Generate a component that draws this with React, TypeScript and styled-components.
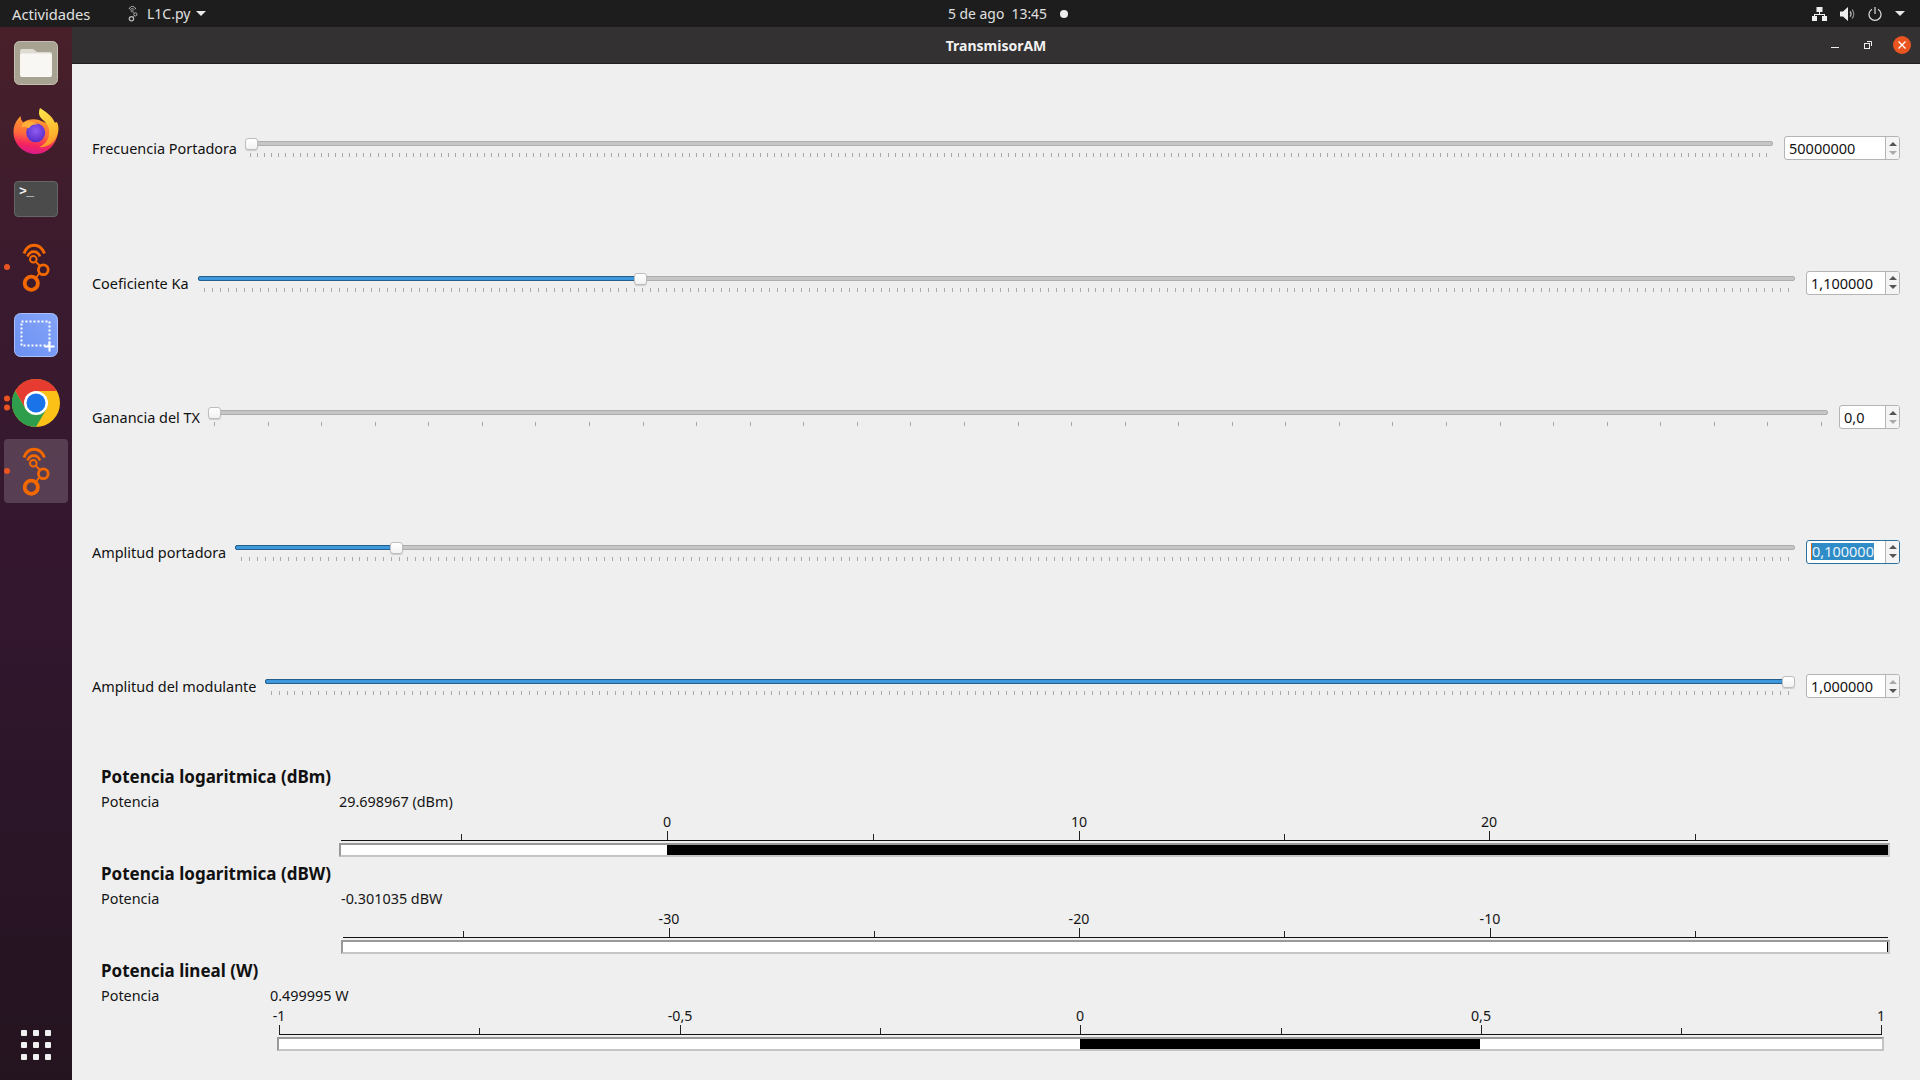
import React from "react";
import styled, { createGlobalStyle } from "styled-components";

const UI = `"Noto Sans", "Open Sans", sans-serif`;

const Global = createGlobalStyle`
  html, body { margin: 0; padding: 0; width: 1920px; height: 1080px; overflow: hidden; background: #efefef; }
  #root { width: 1920px; height: 1080px; }
  * { box-sizing: border-box; }
`;

const Screen = styled.div`
  width: 1920px; height: 1080px; display: flex; flex-direction: column;
  font-family: ${UI}; color: #1a1a1a;
`;

/* ---------- top bar ---------- */
const TopBar = styled.header`
  height: 27px; flex: none; background: #1d1d1d; color: #e0e0e0; display: flex; align-items: center;
  font-size: 14px;
`;
const TopLeft = styled.div`
  width: 948px; flex: none; display: flex; align-items: center; padding-left: 12px;
`;
const Activities = styled.span`
  width: 116px; flex: none; font-size: 14.7px;
`;
const AppName = styled.span`
  margin: 0 6px 0 9px;
`;
const Clock = styled.div`
  display: flex; align-items: center; white-space: pre; font-size: 13.9px;
`;
const ClockDot = styled.span`
  width: 8px; height: 8px; border-radius: 50%; background: #eee; margin-left: 13px;
`;
const Tray = styled.div`
  margin-left: auto; display: flex; align-items: center; padding-right: 15px; gap: 13px;
`;
const Caret = styled.span`
  width: 0; height: 0; border-left: 5px solid transparent; border-right: 5px solid transparent;
  border-top: 5px solid #e8e8e8;
`;

/* ---------- desktop ---------- */
const Desktop = styled.div`
  flex: 1; display: flex; min-height: 0;
`;
const Dock = styled.nav`
  width: 72px; flex: none; display: flex; flex-direction: column; padding: 2px 0 20px;
  background: linear-gradient(180deg, #48202a 0%, #3a1a2e 25%, #34172f 50%, #2b1528 75%, #24141f 100%);
`;
const DockItem = styled.div<{ $active?: boolean }>`
  height: 68px; flex: none; position: relative; display: flex; align-items: center; justify-content: center;
  &::before {
    content: ""; position: absolute; left: 4px; right: 4px; top: 2px; bottom: 2px; border-radius: 4px;
    background: ${(p) => (p.$active ? "rgba(255,255,255,0.17)" : "transparent")};
  }
  & > svg, & > div { position: relative; }
`;
const RunDots = styled.div`
  position: absolute !important; left: 4px; top: 50%; transform: translateY(-50%);
  display: flex; flex-direction: column; gap: 3px;
`;
const RunDot = styled.span`
  width: 6px; height: 6px; border-radius: 50%; background: #e95420; display: block;
`;
const TerminalTile = styled.div`
  width: 44px; height: 36px; border-radius: 4px; background: #4b4b4b; border: 1px solid #666;
  color: #f2f2f2; font: bold 13px/1 "Liberation Mono", monospace; padding: 3px 0 0 4px; letter-spacing: -0.5px;
`;
const AppsGrid = styled.div`
  margin-top: auto; width: 30px; align-self: center; display: grid; grid-template-columns: repeat(3, 6px);
  grid-auto-rows: 6px; gap: 6px;
`;
const AppsDot = styled.span`
  background: #f1f1f1; border-radius: 1px;
`;

/* ---------- window ---------- */
const Window = styled.main`
  flex: 1; display: flex; flex-direction: column; min-width: 0;
`;
const TitleBar = styled.div`
  height: 37px; flex: none; background: #333131; border-bottom: 1px solid #1f1f1f; display: flex; align-items: center;
  position: relative; justify-content: center; color: #f2f2f2; font-weight: 700; font-size: 14px;
`;
const WinButtons = styled.div`
  position: absolute; right: 9px; top: 0; height: 36px; display: flex; align-items: center; gap: 21px;
`;
const MinGlyph = styled.svg`
  margin-right: 4px;
`;
const CloseBtn = styled.span`
  width: 18px; height: 18px; border-radius: 50%; background: #e95420; display: flex; align-items: center; justify-content: center;
`;
const Content = styled.div`
  flex: 1; background: #efefef; display: flex; flex-direction: column; padding: 16.75px 20px 0 20px; min-height: 0;
`;
const Rows = styled.section`
  flex: none; display: grid; grid-template-rows: repeat(5, 134.5px);
`;
const Row = styled.div`
  display: flex; align-items: center; gap: 11px;
`;
const RowLabel = styled.label<{ $w: number }>`
  width: ${(p) => p.$w}px; flex: none; font-size: 14.45px; line-height: 20px; white-space: nowrap;
  color: #111; padding-top: 2px;
`;
const Slider = styled.div`
  flex: 1; min-width: 0; height: 24px; position: relative; padding-top: 5px;
`;
const Groove = styled.div`
  height: 5px; border-radius: 2px; background: #c6c6c6; border: 1px solid #adadad; position: relative;
`;
const GrooveFill = styled.div`
  position: absolute; left: -1px; top: -1px; bottom: -1px; border-radius: 2px;
  background: #3d98dc; border: 1px solid #245f8c;
`;
const Handle = styled.div`
  position: absolute; top: 2px; width: 13px; height: 12px; border-radius: 3px;
  background: linear-gradient(#ffffff, #f2f2f2); border: 1px solid #bdbdbd; box-shadow: 0 1px 1px rgba(0,0,0,0.15);
`;
const TickStrip = styled.svg`
  display: block; width: 100%; height: 4px; margin-top: 7px; overflow: visible;
`;
const Spin = styled.div<{ $w: number; $focus?: boolean }>`
  width: ${(p) => p.$w}px; height: 24px; flex: none; display: flex; background: #fff; border-radius: 3px;
  border: 1px solid ${(p) => (p.$focus ? "#2b6f9e" : "#b4b4b4")}; font-size: 14.5px;
`;
const SpinValue = styled.div`
  flex: 1; min-width: 0; display: flex; align-items: center; padding-left: 4px; color: #111;
`;
const Selected = styled.span`
  background: #308cc6; color: #eaf4fb; border-left: 1px solid #d2691e; line-height: 17px;
`;
const SpinArrows = styled.div`
  width: 14px; flex: none; border-left: 1px solid #b4b4b4; display: flex; flex-direction: column;
  align-items: center; justify-content: center; gap: 5px; background: #f4f4f4; border-radius: 0 2px 2px 0;
`;
const ArrowUp = styled.span<{ $off?: boolean }>`
  width: 0; height: 0; border-left: 4px solid transparent; border-right: 4px solid transparent;
  border-bottom: 4px solid ${(p) => (p.$off ? "#aaaaaa" : "#555555")};
`;
const ArrowDown = styled.span<{ $off?: boolean }>`
  width: 0; height: 0; border-left: 4px solid transparent; border-right: 4px solid transparent;
  border-top: 4px solid ${(p) => (p.$off ? "#aaaaaa" : "#555555")};
`;

/* ---------- meters ---------- */
const Meters = styled.section`
  margin-top: 11.75px; padding: 0 10px 0 9px;
`;
const Meter = styled.div`
  height: 97px; display: flex; flex-direction: column;
`;
const MeterTitle = styled.h3`
  margin: 0; height: 24px; line-height: 24px; font-size: 17px; font-weight: 700; color: #111; white-space: nowrap;
`;
const ReadingRow = styled.div`
  height: 18px; margin-top: 3px; display: flex; align-items: center; font-size: 14.4px; color: #151515;
`;
const ReadingName = styled.span<{ $w: number }>`
  width: ${(p) => p.$w}px; flex: none;
`;
const Gauge = styled.div<{ $left: number; $right: number }>`
  margin: 3px ${(p) => p.$right}px 0 ${(p) => p.$left}px;
`;
const Scale = styled.div`
  height: 28px; margin: 0 2px; position: relative; border-bottom: 1px solid #111;
`;
const ScaleTick = styled.span<{ $major?: boolean }>`
  position: absolute; bottom: 0; width: 1px; background: #222; height: ${(p) => (p.$major ? 9 : 6)}px;
`;
const ScaleLabel = styled.span`
  position: absolute; top: 0; font-size: 14.2px; line-height: 18px; transform: translateX(-50%); color: #151515;
`;
const Bar = styled.div`
  height: 14px; margin-top: 2px; background: #fff; position: relative;
  border-style: solid; border-width: 2px; border-color: #999 #c4c4c4 #c4c4c4 #999;
`;
const BarFill = styled.div`
  position: absolute; top: 0; bottom: 0; background: #000;
`;

/* ---------- icons ---------- */
const RadioLogo = ({ color = "#f46800", w = 30, h = 52 }: { color?: string; w?: number; h?: number }) => (
  <svg width={w} height={h} viewBox="21 10 30 52" fill="none" stroke={color}>
    <path d="M24 22.5C28 11.5 40 11.5 44.5 22.5" strokeWidth="3" />
    <path d="M27.5 25.5C30 19 37.5 19 40 25.5" strokeWidth="2.6" />
    <circle cx="33.3" cy="28.3" r="3.3" strokeWidth="2" />
    <circle cx="43.3" cy="38.7" r="4.9" strokeWidth="2.8" />
    <circle cx="31.3" cy="52.3" r="6.6" strokeWidth="3.8" />
    <path d="M36 31l4 4M39.5 42l-3.5 5" strokeWidth="1.8" />
  </svg>
);

const FilesIcon = () => (
  <svg width="44" height="44" viewBox="0 0 44 44">
    <rect x="0.5" y="0.5" width="43" height="43" rx="5" fill="#a8a292" stroke="#c4bfb1" />
    <path d="M6 10a2 2 0 0 1 2-2h11l4 3h13a2 2 0 0 1 2 2v8H6z" fill="#dfdbd2" />
    <path d="M6 14a2 2 0 0 1 2-1.500h28a2 2 0 0 1 2 2V34a2 2 0 0 1-2 2H8a2 2 0 0 1-2-2z" fill="#f8f7f4" />
  </svg>
);

const FirefoxIcon = () => (
  <svg width="46" height="46" viewBox="0 0 46 46">
    <defs>
      <linearGradient id="ffBody" x1="0.6" y1="0.1" x2="0.45" y2="1">
        <stop offset="0" stopColor="#ff9a2e" />
        <stop offset="0.45" stopColor="#ff6a3a" />
        <stop offset="0.75" stopColor="#f5245f" />
        <stop offset="1" stopColor="#d81b8c" />
      </linearGradient>
      <linearGradient id="ffTail" x1="0.4" y1="0" x2="0.6" y2="1">
        <stop offset="0" stopColor="#ffe24a" />
        <stop offset="0.7" stopColor="#ffb52c" />
        <stop offset="1" stopColor="#ff8a2c" />
      </linearGradient>
      <radialGradient id="ffGlobe" cx="0.5" cy="0.4" r="0.6">
        <stop offset="0" stopColor="#8f5cf0" />
        <stop offset="1" stopColor="#5a2bc9" />
      </radialGradient>
    </defs>
    <path d="M0.500 24C0.500 17 3.500 12 7.700 8C7.500 11 8.500 13 10.500 14.500C14 11.500 20 10.500 26 12L45 20C45.500 35 35 46 22.700 46C10.500 46 0.500 36 0.500 24z" fill="url(#ffBody)" />
    <path d="M27 0C25 5 26 9 30 12C35 16 37 21 36 27C35 33 31 37 26 39C34 40 41 35 44 28C46 23 46 18 44 14C42 15 41.500 14.500 41 13C39 8 33 4 27 0z" fill="url(#ffTail)" />
    <circle cx="22.700" cy="24.700" r="9.500" fill="url(#ffGlobe)" />
    <path d="M10.500 14.500C14 12.500 20 13 25 17C20.500 15.500 17 17.500 16 20.500C14 19 11.500 18 8.500 19.500C8.800 17.500 9.500 16 10.500 14.500z" fill="#ffb03a" />
  </svg>
);

const ShotIcon = () => (
  <svg width="44" height="44" viewBox="0 0 44 44">
    <defs>
      <linearGradient id="shot" x1="0" y1="1" x2="1" y2="0">
        <stop offset="0" stopColor="#6a90f2" />
        <stop offset="1" stopColor="#86a5fa" />
      </linearGradient>
    </defs>
    <rect x="0.5" y="0.5" width="43" height="43" rx="6" fill="url(#shot)" stroke="#a9c0fb" />
    <rect x="7.500" y="8.500" width="28" height="24" fill="none" stroke="#fff" strokeWidth="2" strokeDasharray="2 2" />
    <path d="M35.500 28.500v10M30.500 33.500h10" stroke="#fff" strokeWidth="2" />
  </svg>
);

const ChromeIcon = () => (
  <svg width="48" height="48" viewBox="0 0 48 48">
    <circle cx="24" cy="24" r="24" fill="#fbc116" />
    <path d="M24 0A24 24 0 0 1 44.800 12H24L13.600 30 3.200 12A24 24 0 0 1 24 0z" fill="#e53b30" />
    <path d="M3.200 12L13.600 30 24 36l10.400-6L24 48A24 24 0 0 1 3.200 12z" fill="#2e9e4d" />
    <circle cx="24" cy="24" r="12" fill="#fff" />
    <circle cx="24" cy="24" r="9.500" fill="#1a73e8" />
  </svg>
);

const NetIcon = () => (
  <svg width="15" height="14" viewBox="0 0 15 14" fill="#eee">
    <rect x="4.500" y="0" width="6" height="5" />
    <rect x="0" y="9" width="5" height="5" />
    <rect x="10" y="9" width="5" height="5" />
    <path d="M7 5h1v2h5v2h-1V8H3v1H2V7h5z" />
  </svg>
);
const SpeakerIcon = () => (
  <svg width="15" height="14" viewBox="0 0 15 14">
    <path d="M0 4.500h3L8 0v14L3 9.500H0z" fill="#eee" />
    <path d="M10 4.500a3.500 3.500 0 0 1 0 5" stroke="#ccc" strokeWidth="1.200" fill="none" />
    <path d="M12 2.500a6.500 6.500 0 0 1 0 9" stroke="#888" strokeWidth="1.200" fill="none" />
  </svg>
);
const PowerIcon = () => (
  <svg width="14" height="14" viewBox="0 0 14 14" fill="none" stroke="#ddd" strokeWidth="1.200">
    <path d="M4 2.200a6 6 0 1 0 6 0" />
    <path d="M7 0v7" />
  </svg>
);

/* ---------- data ---------- */
type SliderRow = {
  label: string; labelW: number; handle: number; filled: boolean;
  tickFrom: number; tickTo: number; tickCount: number;
  spinW: number; value: string; upOff?: boolean; downOff?: boolean; focus?: boolean;
};
const sliders: SliderRow[] = [
  { label: "Frecuencia Portadora", labelW: 142, handle: 0, filled: false, tickFrom: 5, tickTo: 1521, tickCount: 214, spinW: 116, value: "50000000", downOff: true },
  { label: "Coeficiente Ka", labelW: 95, handle: 436, filled: true, tickFrom: 6, tickTo: 1590, tickCount: 199, spinW: 94, value: "1,100000" },
  { label: "Ganancia del TX", labelW: 105, handle: 0, filled: false, tickFrom: 6, tickTo: 1613, tickCount: 30, spinW: 61, value: "0,0", downOff: true },
  { label: "Amplitud portadora", labelW: 132, handle: 155, filled: true, tickFrom: 6, tickTo: 1553, tickCount: 196, spinW: 94, value: "0,100000", focus: true },
  { label: "Amplitud del modulante", labelW: 162, handle: 1517, filled: true, tickFrom: 6, tickTo: 1523, tickCount: 194, spinW: 94, value: "1,000000", upOff: true },
];

type Tick = { x: number; label?: string };
type MeterData = {
  title: string; reading: string; nameW: number; left: number; right: number;
  start: number; fillFrom?: number; fillTo?: number; ticks: Tick[];
};
const meters: MeterData[] = [
  {
    title: "Potencia logaritmica (dBm)", reading: "29.698967 (dBm)", nameW: 238, left: 238, right: 0, start: 341, fillFrom: 667, fillTo: 1888,
    ticks: [{ x: 461 }, { x: 667, label: "0" }, { x: 873 }, { x: 1079, label: "10" }, { x: 1284 }, { x: 1489, label: "20" }, { x: 1695 }],
  },
  {
    title: "Potencia logaritmica (dBW)", reading: "-0.301035 dBW", nameW: 240, left: 240, right: 0, start: 343, fillFrom: 1887, fillTo: 1888,
    ticks: [{ x: 463 }, { x: 669, label: "-30" }, { x: 874 }, { x: 1079, label: "-20" }, { x: 1284 }, { x: 1490, label: "-10" }, { x: 1695 }],
  },
  {
    title: "Potencia lineal (W)", reading: "0.499995 W", nameW: 169, left: 176, right: 6, start: 279, fillFrom: 1080, fillTo: 1480,
    ticks: [{ x: 279, label: "-1" }, { x: 479 }, { x: 680, label: "-0,5" }, { x: 880 }, { x: 1080, label: "0" }, { x: 1281 }, { x: 1481, label: "0,5" }, { x: 1681 }, { x: 1881, label: "1" }],
  },
];

const SliderTicks = ({ from, to, count }: { from: number; to: number; count: number }) => {
  const xs = Array.from({ length: count + 1 }, (_, i) => Math.round(from + ((to - from) * i) / count) + 0.5);
  return (
    <TickStrip>
      {xs.map((x) => (
        <line key={x} x1={x} x2={x} y1={0} y2={4} stroke="#a8a8a8" />
      ))}
    </TickStrip>
  );
};

const apps = Array.from({ length: 9 }, (_, i) => i);

export default function App() {
  return (
    <Screen>
      <Global />
      <TopBar>
        <TopLeft>
          <Activities>Actividades</Activities>
          <RadioLogo color="#bdbdbd" w={10} h={17} />
          <AppName>L1C.py</AppName>
          <Caret />
        </TopLeft>
        <Clock>
          5 de ago  13:45
          <ClockDot />
        </Clock>
        <Tray>
          <NetIcon />
          <SpeakerIcon />
          <PowerIcon />
          <Caret />
        </Tray>
      </TopBar>
      <Desktop>
        <Dock>
          <DockItem><FilesIcon /></DockItem>
          <DockItem><FirefoxIcon /></DockItem>
          <DockItem><TerminalTile>&gt;_</TerminalTile></DockItem>
          <DockItem>
            <RunDots><RunDot /></RunDots>
            <RadioLogo />
          </DockItem>
          <DockItem><ShotIcon /></DockItem>
          <DockItem>
            <RunDots><RunDot /><RunDot /></RunDots>
            <ChromeIcon />
          </DockItem>
          <DockItem $active>
            <RunDots><RunDot /></RunDots>
            <RadioLogo />
          </DockItem>
          <AppsGrid>
            {apps.map((i) => <AppsDot key={i} />)}
          </AppsGrid>
        </Dock>
        <Window>
          <TitleBar>
            TransmisorAM
            <WinButtons>
              <MinGlyph width="8" height="8" viewBox="0 0 8 8"><path d="M0 6.500h8" stroke="#eee" /></MinGlyph>
              <svg width="8" height="8" viewBox="0 0 8 8" fill="none" stroke="#eee"><rect x="0.500" y="2.500" width="5" height="5" /><path d="M3 .5h4.500V5" /></svg>
              <CloseBtn>
                <svg width="8" height="8" viewBox="0 0 8 8"><path d="M0.500 0.500l7 7M7.500 0.500l-7 7" stroke="#fff" strokeWidth="1.300" /></svg>
              </CloseBtn>
            </WinButtons>
          </TitleBar>
          <Content>
            <Rows>
              {sliders.map((s) => (
                <Row key={s.label}>
                  <RowLabel $w={s.labelW}>{s.label}</RowLabel>
                  <Slider>
                    <Groove>
                      {s.filled && <GrooveFill style={{ width: s.handle + 6 }} />}
                    </Groove>
                    <SliderTicks from={s.tickFrom} to={s.tickTo} count={s.tickCount} />
                    <Handle style={{ left: s.handle }} />
                  </Slider>
                  <Spin $w={s.spinW} $focus={s.focus}>
                    <SpinValue>
                      {s.focus ? <Selected>{s.value}</Selected> : s.value}
                    </SpinValue>
                    <SpinArrows>
                      <ArrowUp $off={s.upOff} />
                      <ArrowDown $off={s.downOff} />
                    </SpinArrows>
                  </Spin>
                </Row>
              ))}
            </Rows>
            <Meters>
              {meters.map((m) => (
                <Meter key={m.title}>
                  <MeterTitle>{m.title}</MeterTitle>
                  <ReadingRow>
                    <ReadingName $w={m.nameW}>Potencia</ReadingName>
                    {m.reading}
                  </ReadingRow>
                  <Gauge $left={m.left} $right={m.right}>
                    <Scale>
                      {m.ticks.map((t) => (
                        <React.Fragment key={t.x}>
                          <ScaleTick $major={!!t.label} style={{ left: t.x - m.start }} />
                          {t.label && <ScaleLabel style={{ left: t.x - m.start }}>{t.label}</ScaleLabel>}
                        </React.Fragment>
                      ))}
                    </Scale>
                    <Bar>
                      {m.fillFrom !== undefined && m.fillTo !== undefined && (
                        <BarFill style={{ left: m.fillFrom - m.start, width: m.fillTo - m.fillFrom }} />
                      )}
                    </Bar>
                  </Gauge>
                </Meter>
              ))}
            </Meters>
          </Content>
        </Window>
      </Desktop>
    </Screen>
  );
}
